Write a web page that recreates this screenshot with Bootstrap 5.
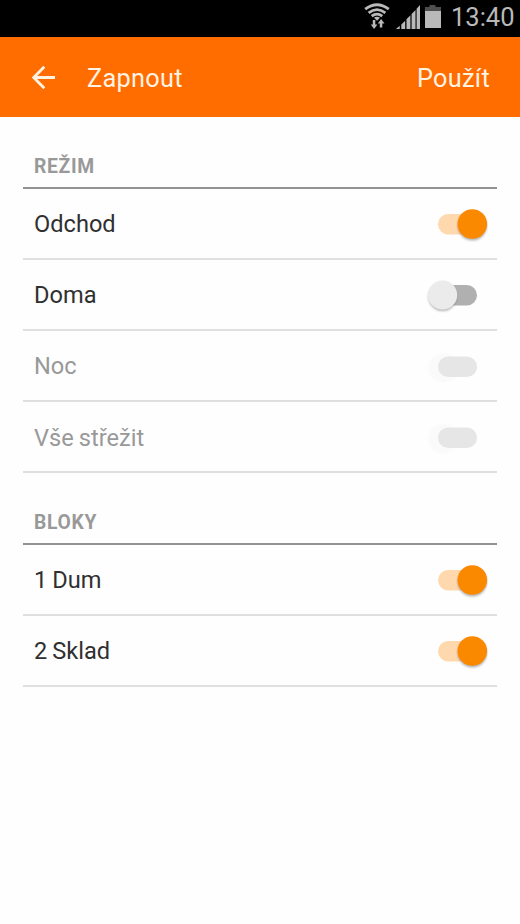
<!DOCTYPE html>
<html lang="cs">
<head>
<meta charset="utf-8">
<meta name="viewport" content="width=device-width, initial-scale=1">
<title>Zapnout</title>
<link rel="stylesheet" href="https://cdn.jsdelivr.net/npm/bootstrap@5.3.0/dist/css/bootstrap.min.css">
<style>
body { font-family: Roboto, "Noto Sans", sans-serif; background: #fefefe; line-height: 1; }
svg { display: block; flex: none; }
.status-bar { height: 37px; color: #b9b9b9; padding-left: 364px; }
.status-time { font-size: 25.5px; font-weight: 400; margin-left: 9px; width: 65px; white-space: nowrap; padding-bottom: 2px; }
.app-bar { height: 80.3px; background: #ff6c00; color: #fff3e2; padding: 2px 30px 0 30px; font-size: 25.3px; letter-spacing: .3px; }
.app-title { margin-left: 30px; }
.setting-group { margin: 0 23px; }
.setting-list { padding-top: .2px; }
.setting-row { height: 71.2px; padding: 2px 9px 0 11px; border-bottom: 2px solid #dfdfdf; font-size: 23.6px; color: #303030; letter-spacing: 0; word-spacing: -.8px; }
.setting-row span { padding-top: 1px; }
.group-title { height: 71.2px; padding: 0 11px 8.4px; border-bottom: 2px solid #929292; font-size: 19.3px; font-weight: 700; color: #999; letter-spacing: .7px; }
.is-off { color: #999; }
</style>
</head>
<body>
<svg width="0" height="0" class="position-absolute" aria-hidden="true">
  <defs>
    <filter id="soft" x="-30%" y="-30%" width="160%" height="160%"><feGaussianBlur stdDeviation="1"/></filter>
    <symbol id="sw-on" viewBox="0 0 64 40">
      <rect x="14" y="10" width="39" height="20.5" rx="10.2" fill="#ffd8ae"/>
      <circle cx="48.3" cy="21.8" r="14.7" fill="#777" opacity=".55" filter="url(#soft)"/>
      <circle cx="48.3" cy="20" r="14.8" fill="#fb8900"/>
    </symbol>
    <symbol id="sw-off" viewBox="0 0 64 40">
      <rect x="14" y="10" width="39" height="20.5" rx="10.2" fill="#b0b0b0"/>
      <circle cx="18.6" cy="21.8" r="14.3" fill="#777" opacity=".5" filter="url(#soft)"/>
      <circle cx="18.6" cy="20" r="14.6" fill="#ebebeb"/>
    </symbol>
    <symbol id="sw-disabled" viewBox="0 0 64 40">
      <circle cx="19" cy="21" r="14.7" fill="#fafafa" filter="url(#soft)"/>
      <rect x="14" y="9.600" width="39" height="20.5" rx="10.2" fill="#e6e6e6"/>
    </symbol>
  </defs>
</svg>

<div class="status-bar bg-black d-flex align-items-center">
  <svg width="28" height="37" viewBox="0 0 28 37" fill="none" stroke="#b9b9b9">
    <path d="M1.200 9.200Q13 .4 24.800 9.200M4.600 12.900Q13 6.400 21.400 12.900M7.700 16.200Q13 12 18.300 16.200" stroke-width="2.800"/>
    <path d="M10 17.800Q13 15.600 16 17.800L13 20.800Z" fill="#b9b9b9" stroke="none"/>
    <path d="M8.800 20h2.500v4.600h2.100L10.100 29 6.800 24.600h2zM15.800 27.500h2.500V23.400h2.200L17.100 19 13.800 23.400h2z" fill="#b9b9b9" stroke="none"/>
  </svg>
  <svg width="28" height="37" viewBox="0 0 28 37" fill="#b9b9b9" class="ms-1">
    <path d="M0 29l3.700-3.200V29zM5.300 24.400l3.900-3.600V29H5.300zM10.500 19.200l3.900-3.900V29h-3.900zM15.600 13.900l3.900-4V29h-3.900zM20.600 8.700L24 5v24h-3.400z"/>
  </svg>
  <svg width="18" height="37" viewBox="0 0 18 37">
    <path d="M5.500 5h6v2H17v5H1V7h4.500z" fill="#4e4e4e"/>
    <path d="M1 11h16v17H1z" fill="#b9b9b9"/>
  </svg>
  <span class="status-time">13:40</span>
</div>

<nav class="app-bar d-flex align-items-center">
  <svg width="27" height="28" viewBox="0 0 27 28" fill="none" stroke="#fff3e2" stroke-width="2.800">
    <path d="M25 13.500H4M14.300 2.800L3.700 13.500l10.600 10.700"/>
  </svg>
  <span class="app-title">Zapnout</span>
  <span class="app-action ms-auto">Použít</span>
</nav>

<main class="setting-list">
  <section class="setting-group">
    <h2 class="group-title d-flex align-items-end m-0">REŽIM</h2>
    <div class="setting-row d-flex align-items-center justify-content-between"><span>Odchod</span><svg width="64" height="40"><use href="#sw-on"/></svg></div>
    <div class="setting-row d-flex align-items-center justify-content-between"><span>Doma</span><svg width="64" height="40"><use href="#sw-off"/></svg></div>
    <div class="setting-row is-off d-flex align-items-center justify-content-between"><span>Noc</span><svg width="64" height="40"><use href="#sw-disabled"/></svg></div>
    <div class="setting-row is-off d-flex align-items-center justify-content-between"><span>Vše střežit</span><svg width="64" height="40"><use href="#sw-disabled"/></svg></div>
  </section>
  <section class="setting-group">
    <h2 class="group-title d-flex align-items-end m-0">BLOKY</h2>
    <div class="setting-row d-flex align-items-center justify-content-between"><span>1 Dum</span><svg width="64" height="40"><use href="#sw-on"/></svg></div>
    <div class="setting-row d-flex align-items-center justify-content-between"><span>2 Sklad</span><svg width="64" height="40"><use href="#sw-on"/></svg></div>
  </section>
</main>
<script src="https://cdn.jsdelivr.net/npm/bootstrap@5.3.0/dist/js/bootstrap.bundle.min.js"></script>
</body>
</html>
